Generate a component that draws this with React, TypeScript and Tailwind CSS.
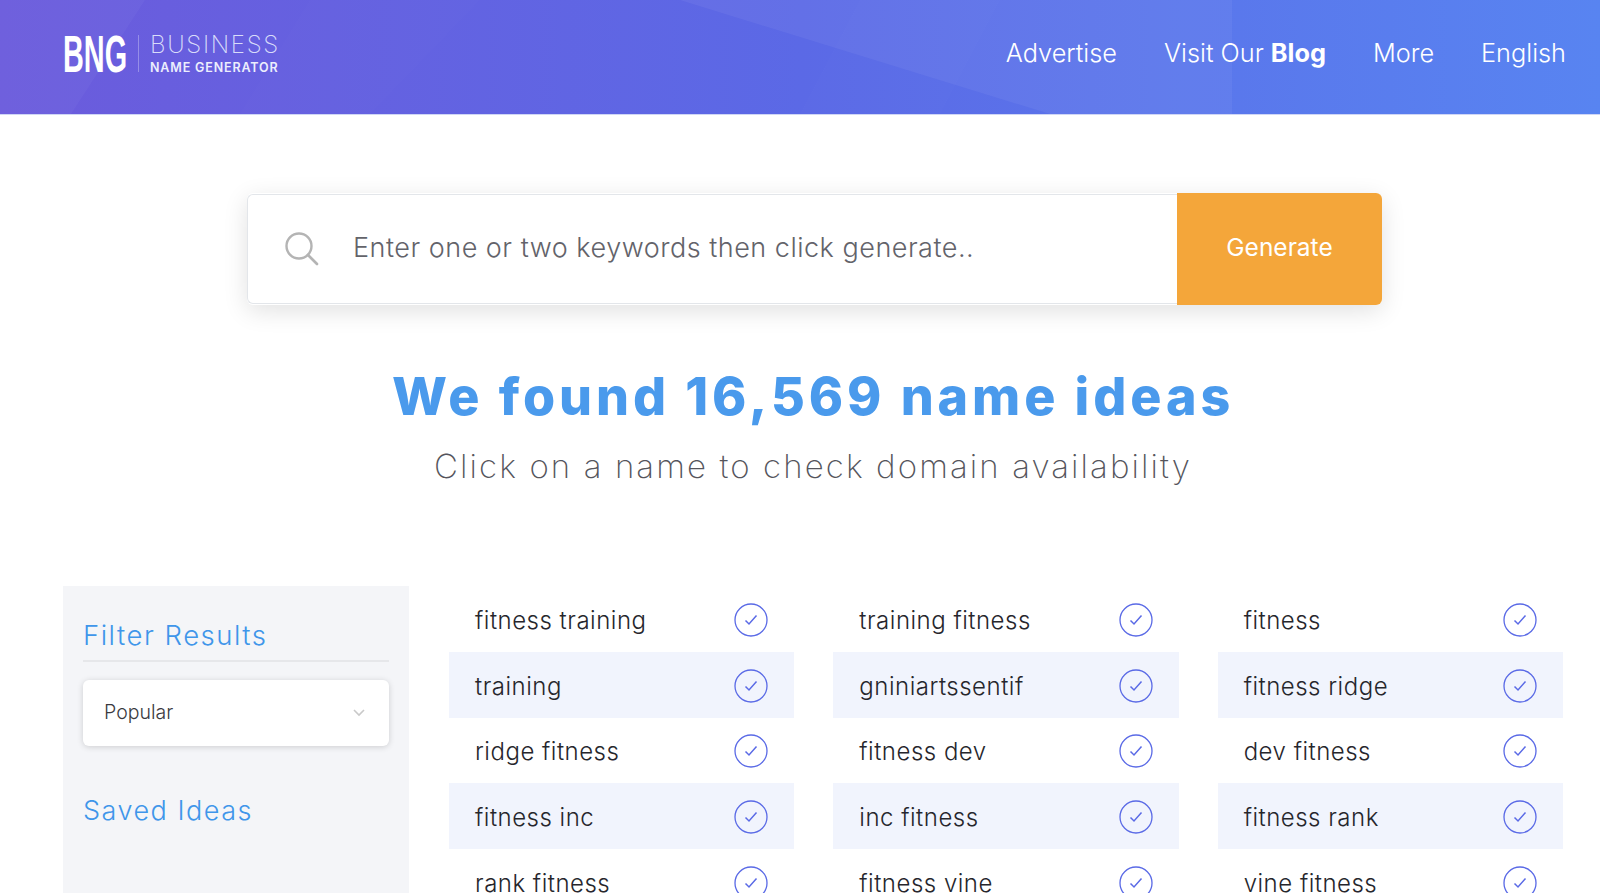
const NAV_FONT = "font-['Inter','Liberation_Sans',sans-serif]";

const NAMES = [
  "fitness training",
  "training fitness",
  "fitness",
  "training",
  "gniniartssentif",
  "fitness ridge",
  "ridge fitness",
  "fitness dev",
  "dev fitness",
  "fitness inc",
  "inc fitness",
  "fitness rank",
  "rank fitness",
  "fitness vine",
  "vine fitness",
];

function CheckCircle() {
  return (
    <svg width="34" height="34" viewBox="0 0 34 34" fill="none" className="mt-[2px] shrink-0">
      <circle cx="17" cy="17" r="16" stroke="#5a6ae6" strokeWidth="1.3" />
      <path d="M11.5 17.5l3.5 3.5 7.5-8.5" stroke="#5a6ae6" strokeWidth="1.5" />
    </svg>
  );
}

function HeaderShapes() {
  return (
    <svg className="absolute inset-0 h-full w-full" viewBox="0 0 1600 114" preserveAspectRatio="none">
      <polygon points="0,0 145,0 71,114 0,114" fill="#ffffff" fillOpacity="0.03" />
      <polygon points="310,0 480,0 370,114 240,114" fill="#ffffff" fillOpacity="0.012" />
      <polygon points="680,0 1232,0 1232,114 1050,114" fill="#ffffff" fillOpacity="0.05" />
      <polygon points="860,0 1000,0 940,114 800,114" fill="#ffffff" fillOpacity="0.012" />
    </svg>
  );
}

export default function App() {
  return (
    <div className={`h-[893px] overflow-hidden bg-white ${NAV_FONT}`}>
      <header className="relative flex h-[115px] items-center justify-between overflow-hidden border-b border-[#cfd6f5] bg-gradient-to-r from-[#6b5bdc] via-[#5b69e6] to-[#5884f1] pl-[63px] pr-[34px] text-white">
        <HeaderShapes />
        <div className="relative box-content flex h-[38px] items-center pb-[7px]">
          <span className="w-[65px] origin-left scale-x-[0.555] font-['Liberation_Sans',sans-serif] text-[52px] leading-none font-bold whitespace-nowrap">
            BNG
          </span>
          <span className="ml-[10px] h-[37px] w-px bg-white/30" />
          <div className="ml-[11px] flex flex-col">
            <span className="text-[24px] leading-[24px] font-extralight tracking-[1.7px] text-[#d8dcfa]">BUSINESS</span>
            <span className="mt-[4px] text-[12.5px] leading-[13px] font-semibold tracking-[0.85px] text-[#eceefd]">NAME GENERATOR</span>
          </div>
        </div>
        <nav className="relative flex gap-[47px] pb-[9px] text-[25.3px] font-light">
          <span>Advertise</span>
          <span>
            Visit Our <b className="font-bold">Blog</b>
          </span>
          <span>More</span>
          <span>English</span>
        </nav>
      </header>

      <div className="mt-[78px] ml-[247px] flex h-[112px] w-[1135px] rounded-[6px] shadow-[0_6px_24px_rgba(0,0,0,0.12)]">
        <div className="my-px flex flex-1 items-center rounded-l-[6px] border border-r-0 border-[#e3e6ea] bg-white pl-[36px]">
          <svg width="36" height="36" viewBox="0 0 36 36" fill="none" className="shrink-0">
            <circle cx="15" cy="15" r="12.5" stroke="#b4b4b4" strokeWidth="2.4" />
            <path d="M24 24l9 9" stroke="#b4b4b4" strokeWidth="2.6" strokeLinecap="round" />
          </svg>
          <span className="ml-[33px] pb-[2px] text-[27px] font-light tracking-[0.5px] text-[#63636a]">
            Enter one or two keywords then click generate..
          </span>
        </div>
        <div className="flex w-[205px] items-center justify-center rounded-r-[6px] bg-[#f4a63a] pb-[4px] text-[24.5px] font-normal text-white">
          Generate
        </div>
      </div>

      <h1 className="mt-[56px] pl-[26px] text-center text-[52px] leading-[72px] font-extrabold tracking-[3.9px] text-[#4a9aec]">
        We found 16,569 name ideas
      </h1>
      <p className="mt-[11px] pl-[26px] text-center text-[33px] leading-[44px] font-extralight tracking-[2.1px] text-[#55555c]">
        Click on a name to check domain availability
      </p>

      <div className="mt-[98px] flex items-start pl-[63px] pr-[37px]">
        <aside className="h-[400px] w-[346px] shrink-0 bg-[#f4f5f8] px-[20px] pt-[32px]">
          <h2 className="border-b-2 border-[#e6e7ea] pb-[8px] text-[27.5px] leading-[34px] font-light tracking-[1.5px] text-[#3f96ea]">
            Filter Results
          </h2>
          <div className="mt-[18px] flex h-[66px] items-center justify-between rounded-[6px] bg-white pr-[24px] pl-[21px] shadow-[0_1px_6px_rgba(0,0,0,0.16)]">
            <span className="text-[19.5px] font-light text-[#3a3a40]">Popular</span>
            <svg width="12" height="8" viewBox="0 0 12 8" fill="none">
              <path d="M1 1l5 5 5-5" stroke="#c9c9c9" strokeWidth="1.6" />
            </svg>
          </div>
          <h2 className="mt-[48px] text-[27px] leading-[34px] font-light tracking-[1.5px] text-[#3f96ea]">
            Saved Ideas
          </h2>
        </aside>
        <div className="ml-[40px] grid flex-1 grid-cols-3 gap-x-[39px]">
          {NAMES.map((name, i) => (
            <div
              key={name}
              className={`flex h-[65.8px] items-center justify-between pr-[26px] pl-[26px] ${
                Math.floor(i / 3) % 2 === 1 ? "bg-[#f1f4fd]" : ""
              }`}
            >
              <span className="pt-[4px] text-[24px] font-light tracking-[0.5px] text-[#26262c]">{name}</span>
              <CheckCircle />
            </div>
          ))}
        </div>
      </div>
    </div>
  );
}
